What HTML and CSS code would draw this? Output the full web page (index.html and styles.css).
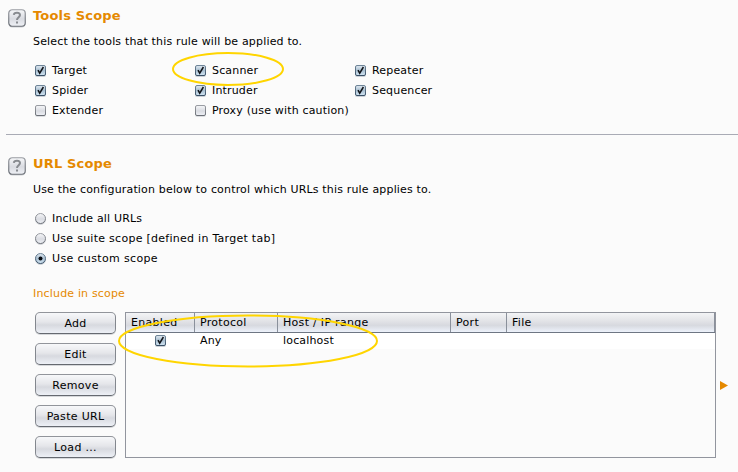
FILE: index.html
```html
<!DOCTYPE html>
<html lang="en">
<head>
<meta charset="utf-8">
<title>Rule scope</title>
<link rel="stylesheet" href="styles.css">
</head>
<body>
<svg class="defs" width="0" height="0" aria-hidden="true">
  <defs>
    <linearGradient id="face" x2="0" y2="1"><stop offset="0" stop-color="#f6f7f9"/><stop offset=".55" stop-color="#d9dbe1"/><stop offset="1" stop-color="#eff1f6"/></linearGradient>
    <linearGradient id="blue" x2="0" y2="1"><stop offset="0" stop-color="#e0e9f1"/><stop offset=".5" stop-color="#a9bfd0"/><stop offset="1" stop-color="#d3e6f5"/></linearGradient>
    <linearGradient id="edge" x2="0" y2="1"><stop offset="0" stop-color="#9a9da3"/><stop offset="1" stop-color="#6c7077"/></linearGradient>
    <linearGradient id="blueEdge" x2="0" y2="1"><stop offset="0" stop-color="#6f8598"/><stop offset="1" stop-color="#3a5167"/></linearGradient>
    <symbol id="on" viewBox="0 0 12 13"><rect x="0" y="1" width="11" height="11" rx="2" fill="#cbd0d6"/><rect x=".5" y=".5" width="10" height="10" rx="1.5" fill="url(#blue)" stroke="url(#blueEdge)"/><path d="M3 5.2 4.7 8.2 8.4 2" fill="none" stroke="#101318" stroke-width="1.5"/></symbol>
    <symbol id="off" viewBox="0 0 12 13"><rect x="0" y="1" width="11" height="11" rx="2" fill="#dcdee1"/><rect x=".5" y=".5" width="10" height="10" rx="1.5" fill="url(#face)" stroke="url(#edge)"/></symbol>
    <symbol id="radio" viewBox="0 0 12 13"><circle cx="5.5" cy="6.4" r="5.5" fill="#d2d4d8"/><circle cx="5.5" cy="5.5" r="5" fill="url(#face)" stroke="url(#edge)"/></symbol>
    <symbol id="radioOn" viewBox="0 0 12 13"><circle cx="5.5" cy="6.4" r="5.5" fill="#cbd0d6"/><circle cx="5.5" cy="5.5" r="5" fill="url(#blue)" stroke="url(#blueEdge)"/><circle cx="5.5" cy="5.5" r="2" fill="#080b10"/></symbol>
    <symbol id="help" viewBox="0 0 19 19"><rect x=".5" y="1.5" width="17" height="17" rx="4" fill="#cccfd3"/><rect x=".75" y=".75" width="16.5" height="16.5" rx="3.5" fill="url(#face)" stroke="url(#edge)" stroke-width="1.2"/><path d="M5.8 5.9C6.1 2.9 12 2.8 12 6.1 12 8.2 9 8.3 9 11M9 12.4v2" fill="none" stroke="#888b90" stroke-width="2"/></symbol>
  </defs>
</svg>

<section class="section tools">
  <svg class="help" width="19" height="19"><use href="#help"/></svg>
  <div class="content">
    <h2 class="title">Tools Scope</h2>
    <p class="lead">Select the tools that this rule will be applied to.</p>
    <div class="grid">
      <label class="opt"><svg class="mark" width="12" height="13"><use href="#on"/></svg><span>Target</span></label>
      <label class="opt ringed"><svg class="mark" width="12" height="13"><use href="#on"/></svg><span>Scanner</span>
        <svg class="ring ring-scanner" width="113" height="36"><ellipse cx="57" cy="18" rx="55" ry="16"/></svg></label>
      <label class="opt"><svg class="mark" width="12" height="13"><use href="#on"/></svg><span>Repeater</span></label>
      <label class="opt"><svg class="mark" width="12" height="13"><use href="#on"/></svg><span>Spider</span></label>
      <label class="opt"><svg class="mark" width="12" height="13"><use href="#on"/></svg><span>Intruder</span></label>
      <label class="opt"><svg class="mark" width="12" height="13"><use href="#on"/></svg><span>Sequencer</span></label>
      <label class="opt"><svg class="mark" width="12" height="13"><use href="#off"/></svg><span>Extender</span></label>
      <label class="opt"><svg class="mark" width="12" height="13"><use href="#off"/></svg><span>Proxy (use with caution)</span></label>
    </div>
  </div>
</section>
<hr class="rule">
<section class="section urls">
  <svg class="help" width="19" height="19"><use href="#help"/></svg>
  <div class="content">
    <h2 class="title">URL Scope</h2>
    <p class="lead">Use the configuration below to control which URLs this rule applies to.</p>
    <div class="radios">
      <label class="opt"><svg class="mark" width="12" height="13"><use href="#radio"/></svg><span>Include all URLs</span></label>
      <label class="opt"><svg class="mark" width="12" height="13"><use href="#radio"/></svg><span class="suite">Use suite scope [defined in Target tab]</span></label>
      <label class="opt"><svg class="mark" width="12" height="13"><use href="#radioOn"/></svg><span class="custom">Use custom scope</span></label>
    </div>
    <h3 class="sub">Include in scope</h3>
    <div class="scope">
      <div class="buttons">
        <button class="btn">Add</button>
        <button class="btn">Edit</button>
        <button class="btn">Remove</button>
        <button class="btn">Paste URL</button>
        <button class="btn">Load ...</button>
      </div>
      <div class="table">
        <div class="row head"><span>Enabled</span><span>Protocol</span><span>Host / IP range</span><span>Port</span><span>File</span></div>
        <div class="row body"><span class="check"><svg width="12" height="13"><use href="#on"/></svg></span><span>Any</span><span>localhost</span><span></span><span></span></div>
        <svg class="ring ring-row" width="262" height="55"><ellipse cx="131" cy="27" rx="129" ry="25.5"/></svg>
      </div>
      <svg class="arrow" width="8" height="9"><path d="M0 0 8 4.5 0 9z"/></svg>
    </div>
  </div>
</section>
</body>
</html>
```

FILE: styles.css
```css
* { box-sizing: border-box; }
body {
  margin: 0;
  height: 472px;
  overflow: hidden;
  background: #fbfbfb;
  color: #000;
  font: 11px/20px "DejaVu Sans", Verdana, sans-serif;
  letter-spacing: .17px;
}
.defs { position: absolute; }
.section { display: flex; padding-left: 8px; }
.tools { height: 134px; padding-top: 6px; }
.urls { padding-top: 19px; }
.help { flex: none; margin: 3px 6px 0 0; }
.content { flex: 1; }
.title { margin: 0; font-size: 13px; font-weight: bold; line-height: 20px; color: #e58900; }
.lead { margin: 6px 0 8px; }
.grid { display: grid; grid-template-columns: repeat(3, 160px); padding-left: 2px; }
.radios { padding-left: 2px; }
.opt { display: flex; height: 20px; white-space: nowrap; }
.opt span { padding-top: 1px; }
.suite { letter-spacing: .27px; }
.custom { letter-spacing: .35px; }
.mark { flex: none; margin: 5px 5px 0 0; }
.ringed { position: relative; }
.ring { position: absolute; overflow: visible; fill: none; stroke: #ffd500; stroke-width: 2; pointer-events: none; }
.ring-scanner { left: -24px; top: -9px; }
.rule { height: 1px; margin: 0 0 0 6px; border: 0; background: #a9abb5; }
.sub { margin: 16px 0 8px; font-size: 11px; font-weight: normal; color: #e58900; }
.scope { display: flex; padding-left: 2px; }
.buttons { display: flex; flex-direction: column; gap: 9px; width: 81px; margin-right: 9px; }
.btn {
  height: 22px;
  padding: 2px 0 0;
  border: 1px solid;
  border-color: #92959b #83878e #656970;
  border-radius: 5px;
  background: linear-gradient(#f7f8fa, #e5e6ea 45%, #d7d9df 60%, #edf0f6);
  box-shadow: 0 1px 0 #d6d8db;
  font: inherit;
  line-height: 18px;
  letter-spacing: .3px;
  color: #000;
}
.table { position: relative; width: 591px; height: 146px; border: 1px solid #92959e; }
.row { display: grid; grid-template-columns: 69px 83px 173px 56px 208px; }
.row > span { padding-left: 5px; white-space: nowrap; }
.head {
  height: 20px;
  border-bottom: 1px solid #6e7683;
  background: linear-gradient(#f3f4f6, #e1e2e6 45%, #d7d9df 65%, #edf2fb);
  line-height: 19px;
  letter-spacing: .3px;
}
.head > span { height: 19px; border-right: 1px solid #8a909b; }
.body { height: 16px; background: #fff; line-height: 15px; }
.body > .check { padding-left: 29px; }
.check svg { display: block; margin-top: 2px; }
.ring-row { left: -9px; top: 1px; }
.arrow { margin: 69px 0 0 4px; fill: #e58900; }
```
